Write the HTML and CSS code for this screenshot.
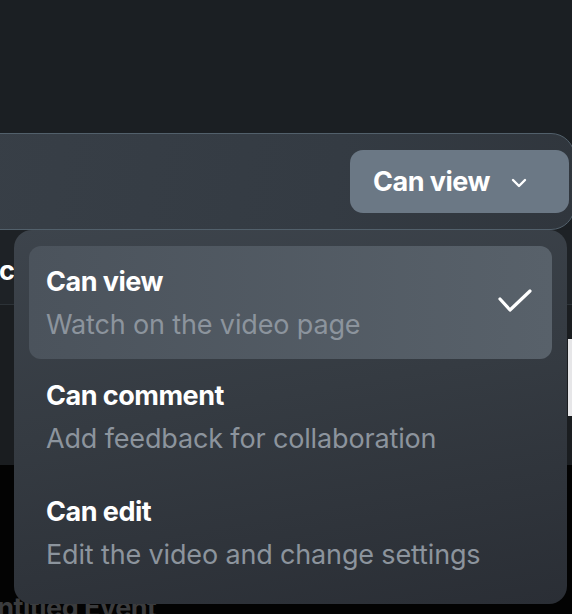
FILE: index.html
```html
<!DOCTYPE html>
<html>
<head>
<meta charset="utf-8">
<link rel="stylesheet" href="styles.css">
</head>
<body>
<div class="page">
  <div class="top"></div>
  <div class="panel">
    <button class="perm-btn">
      <span>Can view</span>
      <svg class="chev" width="20" height="12" viewBox="0 0 20 12"><path d="M4 3 L10 9 L16 3" fill="none" stroke="#fff" stroke-width="2.4" stroke-linecap="round" stroke-linejoin="round"/></svg>
    </button>
  </div>
  <div class="below">
    <div class="row row1"><span class="row-text">co</span></div>
    <div class="row row2"></div>
    <div class="row row3"></div>
    <div class="row row4"><span class="event">Untitled Event</span></div>
    <div class="side-white"></div>
  </div>

  <div class="menu">
    <div class="item selected">
      <div class="item-text">
        <div class="title">Can view</div>
        <div class="sub">Watch on the video page</div>
      </div>
      <svg class="check" width="40" height="30" viewBox="0 0 40 30"><path d="M4 11 L14 22 L34 3" fill="none" stroke="#fff" stroke-width="3.2" stroke-linecap="round" stroke-linejoin="round"/></svg>
    </div>
    <div class="item">
      <div class="item-text">
        <div class="title">Can comment</div>
        <div class="sub">Add feedback for collaboration</div>
      </div>
    </div>
    <div class="item">
      <div class="item-text">
        <div class="title">Can edit</div>
        <div class="sub">Edit the video and change settings</div>
      </div>
    </div>
  </div>
</div>
</body>
</html>
```

FILE: styles.css
```css
* { box-sizing: border-box; }
html, body { margin: 0; padding: 0; }
body {
  width: 572px;
  height: 614px;
  overflow: hidden;
  background: #1b1f23;
  font-family: Inter, "Noto Sans", sans-serif;
}
.page {
  position: relative;
  width: 572px;
  height: 614px;
  display: flex;
  flex-direction: column;
}
.top {
  height: 133px;
  flex: none;
  background: #1b1f23;
}
.panel {
  flex: none;
  height: 97px;
  margin-left: -30px;
  margin-right: -3px;
  border: 1px solid #52606b;
  border-radius: 24px;
  background: linear-gradient(100deg, #383f47 0%, #343b43 60%, #30363d 100%);
  display: flex;
  justify-content: flex-end;
  align-items: center;
  padding: 0 5px 0 0;
}
.perm-btn {
  width: 219px;
  height: 63px;
  border: none;
  border-radius: 13px;
  background: #6b7885;
  color: #fff;
  font-family: inherit;
  font-size: 27px;
  font-weight: 700;
  letter-spacing: -0.5px;
  display: flex;
  align-items: center;
  padding: 0 0 0 23px;
  gap: 19px;
}
.chev { margin-top: 2px; }
.below {
  position: relative;
  flex: 1;
  display: flex;
  flex-direction: column;
}
.row { flex: none; }
.row1 {
  height: 75px;
  background: #1e2226;
  border-bottom: 1px solid #2c3237;
  display: flex;
  align-items: center;
  padding-top: 6px;
}
.row-text {
  color: #fff;
  font-weight: 700;
  font-size: 27px;
  margin-left: -1px;
  letter-spacing: -0.5px;
}
.row2 { height: 160px; background: #1a1d20; }
.row3 { height: 131px; background: #030303; }
.row4 {
  height: 40px;
  background: #030303;
}
.event {
  display: block;
  color: #3b3c3e;
  font-size: 27px;
  font-weight: 700;
  margin-left: -22px;
  margin-top: -5px;
  letter-spacing: -0.5px;
}
.side-white {
  position: absolute;
  right: 0;
  top: 109px;
  width: 4px;
  height: 77px;
  background: #e6e6e8;
}
.menu {
  position: absolute;
  left: 14px;
  top: 230px;
  width: 553px;
  height: 374px;
  border-radius: 18px;
  background: linear-gradient(170deg, #3d444c 0%, #353b42 45%, #2a2e35 100%);
  padding: 16px 15px 12px;
  display: flex;
  flex-direction: column;
}
.item {
  flex: none;
  height: 116px;
  border-radius: 12px;
  padding: 1px 17px 0;
  display: flex;
  align-items: center;
  justify-content: space-between;
}
.item.selected {
  height: 113px;
  background: linear-gradient(90deg, #4b535c 0%, #58616a 100%);
}
.item-text {
  display: flex;
  flex-direction: column;
  gap: 11px;
}
.title {
  color: #fff;
  font-size: 27px;
  font-weight: 700;
  letter-spacing: -0.5px;
  line-height: 32px;
}
.sub {
  color: #8c949d;
  font-size: 27px;
  font-weight: 400;
  letter-spacing: -0.15px;
  line-height: 32px;
}
.check { margin-right: -1px; margin-top: 0; }
```
